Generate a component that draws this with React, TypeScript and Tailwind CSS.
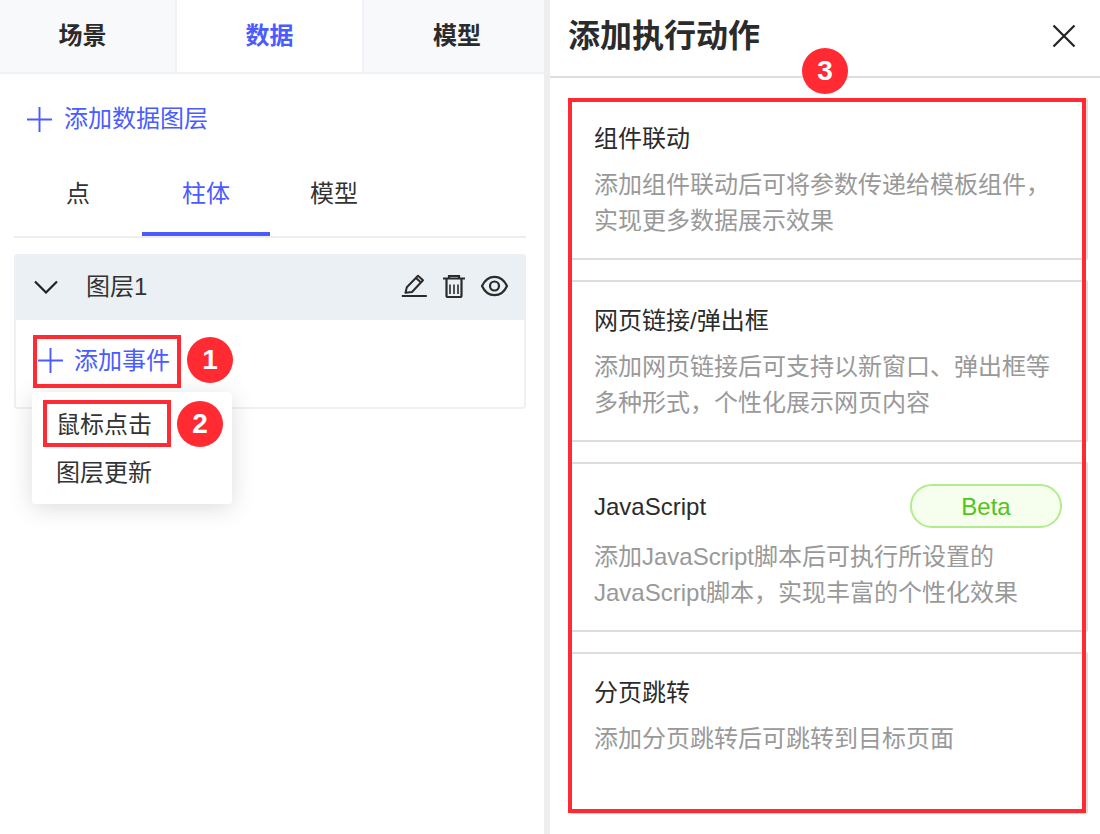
const FONT = 'font-["Liberation_Sans","Noto_Sans_CJK_SC",sans-serif]'

const ACTIONS = [
  { title: '组件联动', lines: ['添加组件联动后可将参数传递给模板组件，', '实现更多数据展示效果'] },
  { title: '网页链接/弹出框', lines: ['添加网页链接后可支持以新窗口、弹出框等', '多种形式，个性化展示网页内容'] },
  { title: 'JavaScript', beta: true, lines: ['添加JavaScript脚本后可执行所设置的', 'JavaScript脚本，实现丰富的个性化效果'] },
  { title: '分页跳转', lines: ['添加分页跳转后可跳转到目标页面'] },
]

function Plus({ className }: { className: string }) {
  return (
    <svg className={className} viewBox="0 0 26 26" fill="none" stroke="#4a5cff" strokeWidth="2">
      <path d="M0 13h26M13 0v26" />
    </svg>
  )
}

function Badge({ n, className }: { n: number; className: string }) {
  return (
    <div className={`absolute flex h-[46px] w-[46px] items-center justify-center rounded-full bg-[#ff2a32] text-[28px] font-bold leading-none text-white ${className}`}>
      {n}
    </div>
  )
}

function LayerIcons() {
  return (
    <div className="ml-auto flex items-center gap-[14px] pr-[17px]">
      <svg width="26" height="26" viewBox="0 0 26 26" fill="none" stroke="#2b2b2b" strokeWidth="2">
        <path d="M0.800 22h25" />
        <path d="M4.500 18.800l1.300-5.600L17 1.800l5 4.500L11 18z" strokeLinejoin="round" />
        <path d="M15 4l5 4.500" />
      </svg>
      <svg width="26" height="26" viewBox="0 0 26 26" fill="none" stroke="#2b2b2b" strokeWidth="2.200">
        <path d="M2 4.500h22M8 4.500V2h10v2.500" />
        <path d="M5.500 5v16.500a1.500 1.500 0 0 0 1.500 1.500h12a1.500 1.500 0 0 0 1.500-1.500V5" />
        <path d="M9 10.500v9.500M13 10.500v9.500M17 10.500v9.500" strokeWidth="1.600" />
      </svg>
      <svg width="28" height="26" viewBox="0 0 28 26" fill="none" stroke="#2b2b2b" strokeWidth="2.200">
        <path d="M1 12C4 5.500 8 2.800 13.500 2.800S23 5.500 26 12C23 18.500 19 21.200 13.500 21.200S4 18.500 1 12z" strokeLinejoin="round" />
        <circle cx="13.500" cy="12" r="4.500" />
      </svg>
    </div>
  )
}

function LeftPanel() {
  return (
    <aside className="relative h-full w-[550px] shrink-0 border-r-[6px] border-[#eeeeee] bg-white">
      <div className="flex h-[74px] border-b-2 border-[#f0f2f5] text-[24px] font-bold leading-none text-[#2b2b2b]">
        <div className="flex w-[177px] items-center justify-center border-r-2 border-[#f0f2f5] bg-[#f8f9fb] pr-[10px]">场景</div>
        <div className="flex w-[187px] items-center justify-center border-r-2 border-[#f0f2f5] text-[#4a5cff]">数据</div>
        <div className="flex flex-1 items-center justify-center bg-[#f8f9fb] pl-[6px]">模型</div>
      </div>

      <div className="flex h-[88px] items-center pl-[27px] pt-[2px] text-[24px] text-[#4a5cff]">
        <Plus className="h-[25px] w-[25px]" />
        <span className="ml-[12px]">添加数据图层</span>
      </div>

      <div className="ml-[14px] mr-[18px] flex h-[76px] border-b-2 border-[#eeeeee] text-[24px] text-[#333]">
        <div className="flex w-[128px] items-center justify-center pb-[10px]">点</div>
        <div className="flex w-[128px] items-center justify-center border-b-[4px] border-[#4a5cff] pb-[6px] text-[#4a5cff]">柱体</div>
        <div className="flex w-[128px] items-center justify-center pb-[10px]">模型</div>
      </div>

      <div className="ml-[14px] mr-[18px] mt-[16px] h-[155px] rounded-[4px] border-2 border-t-0 border-[#f0f0f0]">
        <div className="-mx-[2px] flex h-[66px] items-center rounded-t-[4px] bg-[#ebf0f4] text-[24px] text-[#333]">
          <svg className="ml-[20px]" width="24" height="14" viewBox="0 0 24 14" fill="none" stroke="#222" strokeWidth="2.200">
            <path d="M1 1.500l11 11 11-11" />
          </svg>
          <span className="ml-[28px]">图层1</span>
          <LayerIcons />
        </div>
        <div className="flex items-center pl-[22px] pt-[28px] text-[24px] leading-none text-[#4a5cff]">
          <Plus className="h-[25px] w-[25px]" />
          <span className="ml-[11px]">添加事件</span>
        </div>
      </div>

      {/* dropdown */}
      <div className="absolute left-[32px] top-[392px] h-[112px] w-[200px] rounded-[4px] bg-white pl-[24px] pt-[15px] text-[24px] leading-[36px] text-[#333] shadow-[0_4px_24px_rgba(0,0,0,0.14)]">
        <div>鼠标点击</div>
        <div className="mt-[12px]">图层更新</div>
      </div>

      {/* annotations */}
      <div className="absolute left-[33px] top-[335px] h-[53px] w-[148px] border-[4px] border-[#ff2a32]" />
      <Badge n={1} className="left-[187px] top-[337px]" />
      <div className="absolute left-[43px] top-[400px] h-[47px] w-[128px] border-[4px] border-[#ff2a32]" />
      <Badge n={2} className="left-[177px] top-[401px]" />
    </aside>
  )
}

function RightPanel() {
  return (
    <section className="relative h-full flex-1 bg-white">
      <div className="flex h-[78px] items-center border-b-2 border-[#dddddd] pb-[4px] pl-[18px] pr-[24px]">
        <h1 className="text-[32px] font-bold leading-none text-[#2b2b2b]">添加执行动作</h1>
        <svg className="ml-auto" width="24" height="24" viewBox="0 0 24 24" fill="none" stroke="#222" strokeWidth="2.200">
          <path d="M1.500 1.500l21 21M22.500 1.500l-21 21" />
        </svg>
      </div>

      <div className="ml-[20px] mr-[12px] mt-[20px] flex flex-col gap-[20px]">
        {ACTIONS.map(a => (
          <div key={a.title} className={`rounded-[2px] border-2 border-[#dddddd] pl-[22px] pr-[24px] ${a.beta ? 'pb-[19px] pt-[20px]' : 'pb-[19px] pt-[21px]'}`}>
            <div className={`flex items-center justify-between text-[24px] text-[#2b2b2b] ${a.beta ? 'h-[44px]' : 'h-[36px]'}`}>
              <span className={a.beta ? 'pt-[2px]' : ''}>{a.title}</span>
              {a.beta && (
                <span className="flex h-[44px] w-[152px] items-center justify-center rounded-full border-2 border-[#b3ec8e] bg-[#f6ffed] pt-[2px] text-[#52c41a]">
                  Beta
                </span>
              )}
            </div>
            <div className={`${a.beta ? 'mt-[11px]' : 'mt-[10px]'} text-[24px] leading-[36px] text-[#999999]`}>
              {a.lines.map(l => (
                <div key={l} className="whitespace-nowrap">{l}</div>
              ))}
            </div>
            {a.lines.length === 1 && <div className="h-[36px]" />}
          </div>
        ))}
      </div>

      <div className="absolute left-[18px] top-[98px] h-[715px] w-[518px] border-[4px] border-[#ff2a32]" />
      <Badge n={3} className="left-[252px] top-[48px]" />
    </section>
  )
}

export default function App() {
  return (
    <div className={`flex h-[834px] w-[1100px] overflow-hidden bg-white ${FONT}`}>
      <LeftPanel />
      <RightPanel />
    </div>
  )
}
